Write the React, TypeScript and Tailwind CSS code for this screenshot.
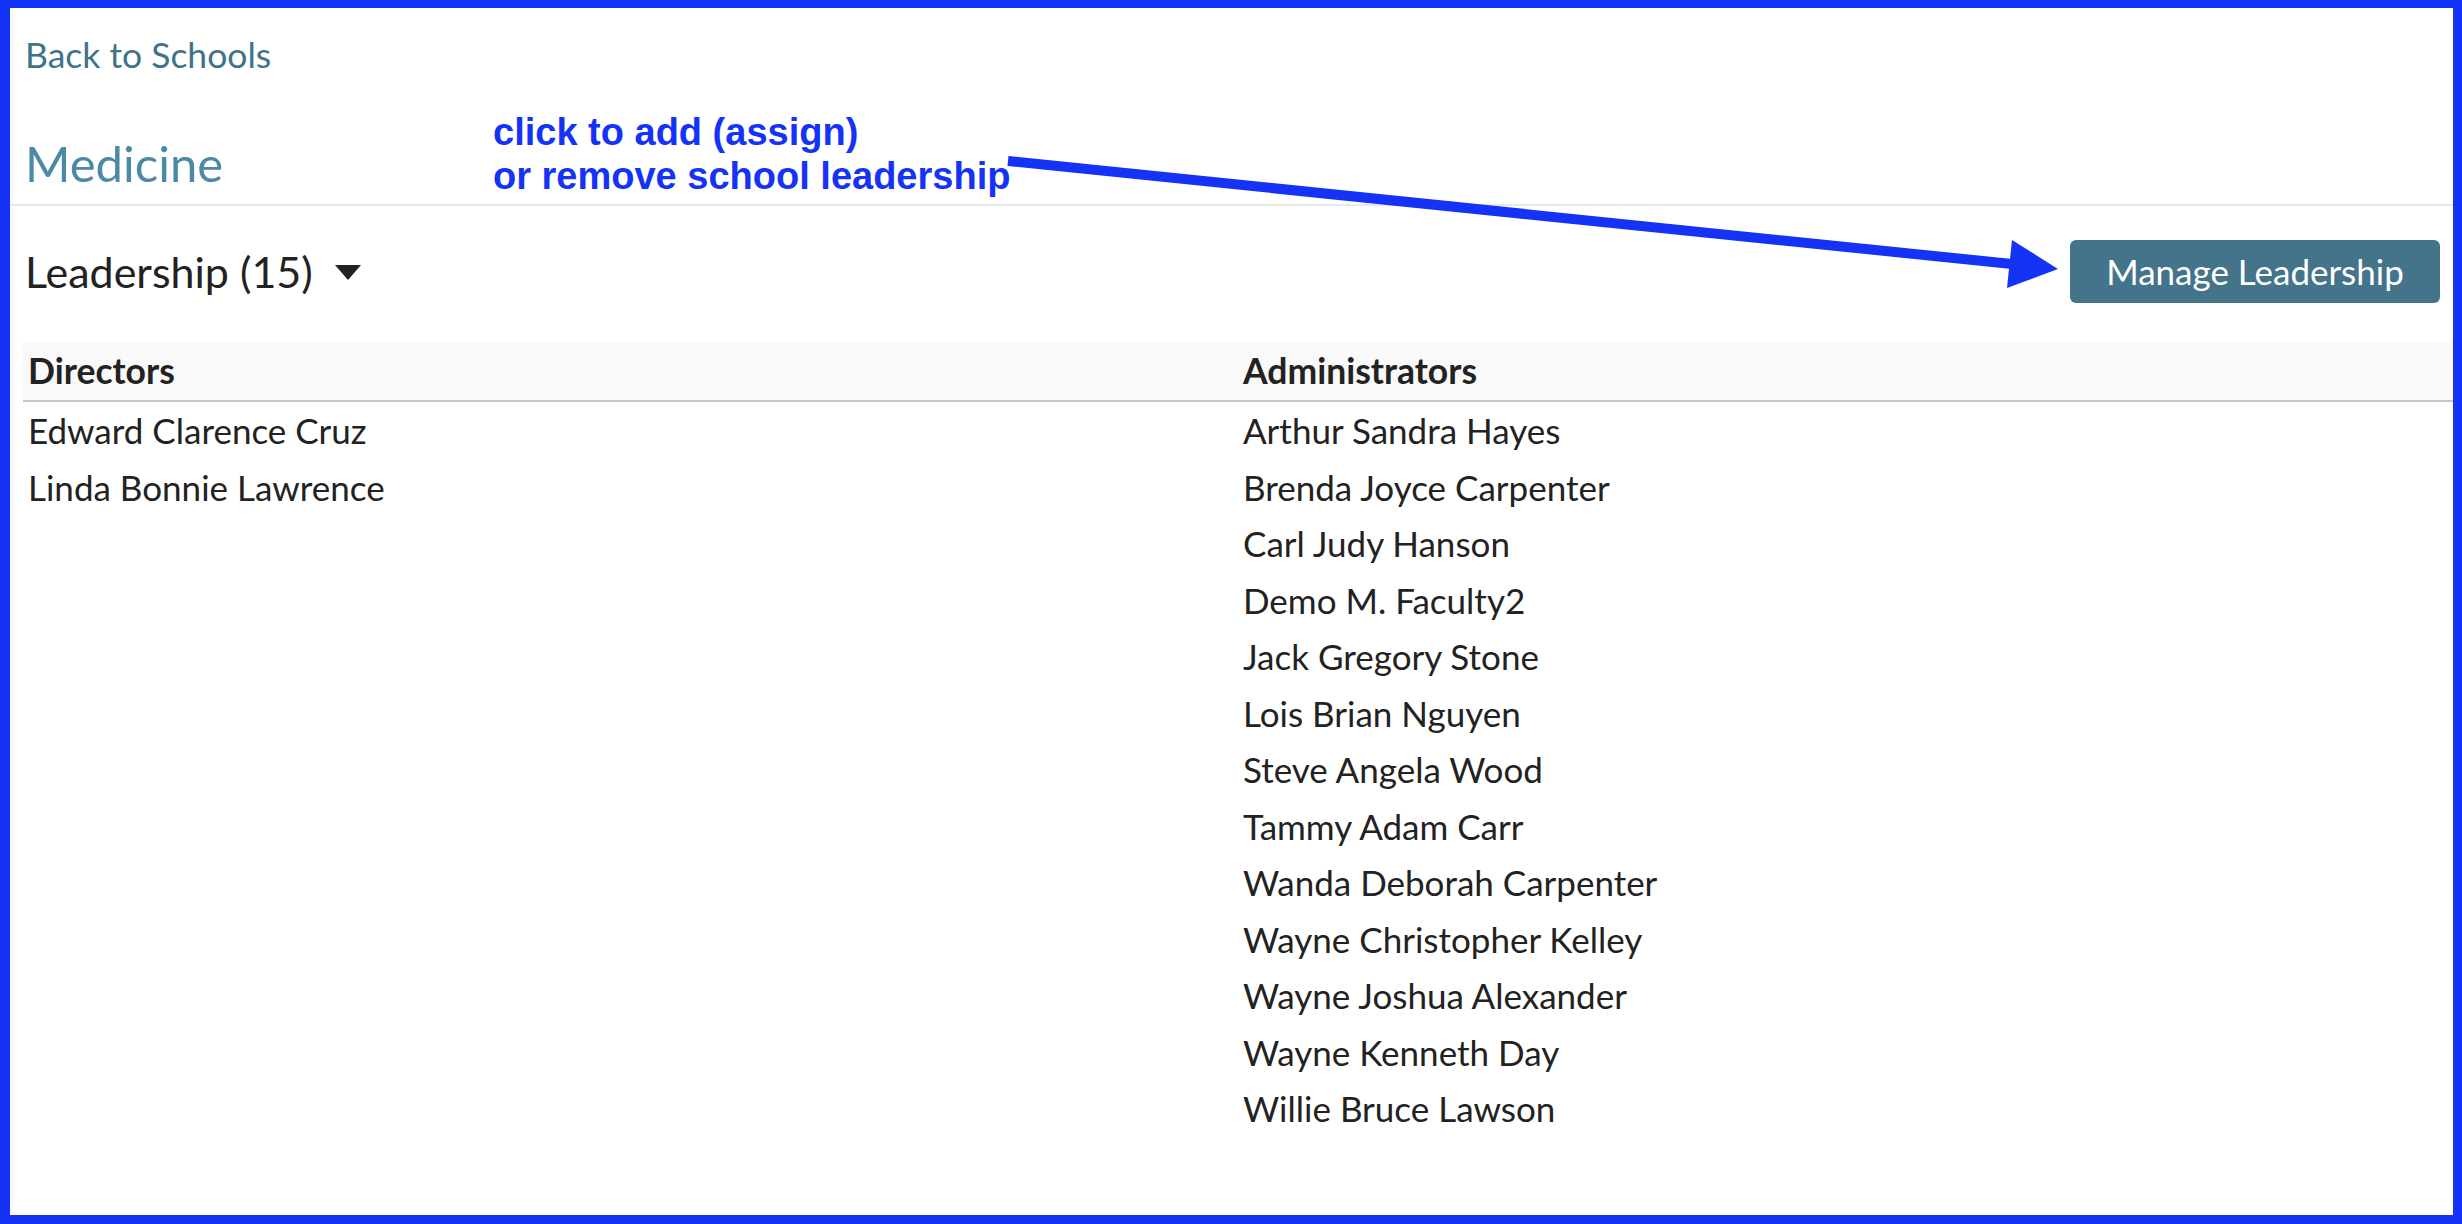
import React from "react";

const directors = ["Edward Clarence Cruz", "Linda Bonnie Lawrence"];
const admins = [
  "Arthur Sandra Hayes",
  "Brenda Joyce Carpenter",
  "Carl Judy Hanson",
  "Demo M. Faculty2",
  "Jack Gregory Stone",
  "Lois Brian Nguyen",
  "Steve Angela Wood",
  "Tammy Adam Carr",
  "Wanda Deborah Carpenter",
  "Wayne Christopher Kelley",
  "Wayne Joshua Alexander",
  "Wayne Kenneth Day",
  "Willie Bruce Lawson",
];

export default function App() {
  const rows = Array.from({ length: admins.length }, (_, i) => i);
  return (
    <div
      className="relative h-[1224px] w-full overflow-hidden bg-white border-t-8 border-l-[10px] border-r-[9px] border-b-[9px] border-[#1533f7] text-[#222222]"
      style={{ fontFamily: "Lato, 'Noto Sans', sans-serif" }}
    >
      <div className="px-[15px] pt-[27px]">
        <a className="block text-[35.5px] leading-[40px] text-[#3e7388]">Back to Schools</a>
        <h1 className="mt-[58px] text-[49px] leading-[60px] text-[#4b89a5]">Medicine</h1>
      </div>
      <div className="mt-[11px] h-[2px] bg-[#e6eaeb]" />

      <div className="mt-[34px] flex items-center justify-between pl-[15px] pr-[13px]">
        <div className="flex items-center gap-[22px]">
          <span className="text-[43px] leading-[48px]">Leadership (15)</span>
          <svg width="26" height="16" viewBox="0 0 26 16" className="mt-[2px]">
            <polygon points="0,0 26,0 13,15" fill="#222222" />
          </svg>
        </div>
        <button className="h-[63px] w-[370px] rounded-[6px] bg-[#43748a] text-[35px] text-white">
          Manage Leadership
        </button>
      </div>

      <div className="ml-[13px] mt-[39px]">
        <div className="grid h-[60px] grid-cols-2 items-center border-b-2 border-[#c2c8cc] bg-[#f9f9f9] text-[35.5px] font-bold">
          <div className="pl-[5px]">Directors</div>
          <div className="pl-[5px]">Administrators</div>
        </div>
        {rows.map((i) => (
          <div key={i} className="grid h-[56.5px] grid-cols-2 items-center text-[35px]">
            <div className="pl-[5px]">{directors[i] ?? ""}</div>
            <div className="pl-[5px]">{admins[i]}</div>
          </div>
        ))}
      </div>

      <div
        className="absolute left-[483px] top-[102px] text-[38px] font-bold leading-[44px] text-[#1533f7]"
        style={{ fontFamily: "'Liberation Sans', Arial, sans-serif" }}
      >
        <div>click to add (assign)</div>
        <div>or remove school leadership</div>
      </div>

      <svg
        className="pointer-events-none absolute left-0 top-0"
        width="2443"
        height="1207"
        viewBox="0 0 2443 1207"
      >
        <line x1="998" y1="153" x2="2002" y2="256" stroke="#1533f7" strokeWidth="10" />
        <polygon points="2002,232 2048,261 1997,280" fill="#1533f7" />
      </svg>
    </div>
  );
}
